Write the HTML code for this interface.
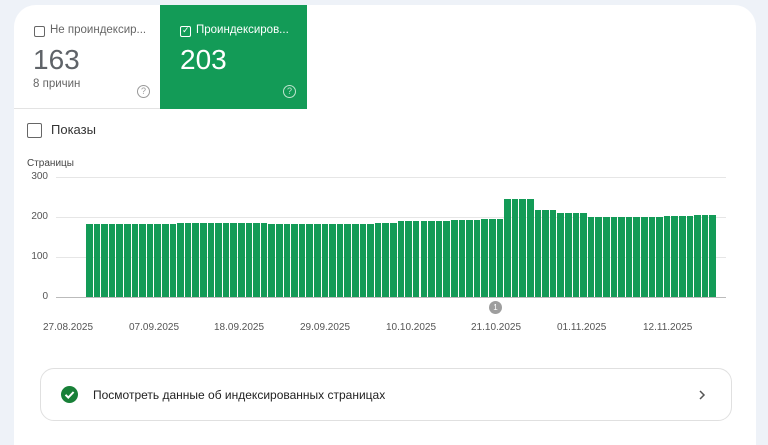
<!DOCTYPE html>
<html><head><meta charset="utf-8"><style>
*{margin:0;padding:0;box-sizing:border-box}
body{width:768px;height:432px;overflow:hidden;background:#eef2f8;font-family:"Liberation Sans",sans-serif;position:relative}
.card{position:absolute;left:14px;top:5px;width:742px;height:440px;background:#fff;border-radius:22px 22px 0 0;overflow:hidden}
.abs{position:absolute}
.t1{left:0;top:0;width:146px;height:104px;border-bottom:1px solid #e3e3e3}
.t2{left:146px;top:0;width:147px;height:104px;background:#139b57;color:#fff}
.cb{position:absolute;width:11px;height:11px;border:1.5px solid #666;border-radius:2px}
.grid{position:absolute;left:56px;width:670px;height:1px;background:#e6e6e6}
.yl{position:absolute;font-size:10px;color:#555;text-align:right;width:30px;left:4px}
.xl{position:absolute;top:322px;font-size:10px;color:#555}
</style></head><body>
<div class="card">
 <div class="abs t1">
  <div class="cb" style="left:20px;top:21px"></div>
  <div class="abs" style="left:36px;top:19px;font-size:11.5px;color:#666">Не проиндексир...</div>
  <div class="abs" style="left:19px;top:39px;font-size:28px;color:#5f6368">163</div>
  <div class="abs" style="left:19px;top:73px;font-size:11.5px;color:#666">8 причин</div>
  <div class="abs" style="left:123px;top:80px;width:13px;height:13px;border:1.3px solid #999;border-radius:50%;font-size:9px;color:#999;text-align:center;line-height:11px">?</div>
 </div>
 <div class="abs t2">
  <div class="cb" style="left:20px;top:21px;border-color:#fff"></div>
  <div class="abs" style="left:22px;top:20px;font-size:9px;color:#fff">✓</div>
  <div class="abs" style="left:36px;top:19px;font-size:11.5px">Проиндексиров...</div>
  <div class="abs" style="left:20px;top:39px;font-size:28px">203</div>
  <div class="abs" style="left:123px;top:80px;width:13px;height:13px;border:1.3px solid #bfe5cf;border-radius:50%;font-size:9px;color:#bfe5cf;text-align:center;line-height:11px">?</div>
 </div>
 <div class="cb" style="left:13px;top:118px;width:15px;height:15px;border-width:1.5px"></div>
 <div class="abs" style="left:37px;top:117px;font-size:13px;color:#333">Показы</div>
 <div class="abs" style="left:13px;top:153px;font-size:10px;color:#444">Страницы</div>
</div>
<div class="grid" style="top:177px"></div>
<div class="grid" style="top:217px"></div>
<div class="grid" style="top:257px"></div>
<div class="grid" style="top:297px;background:#bbb"></div>
<div class="yl" style="top:171px;left:18px">300</div>
<div class="yl" style="top:211px;left:18px">200</div>
<div class="yl" style="top:251px;left:18px">100</div>
<div class="yl" style="top:291px;left:18px">0</div>
<div id="bars"></div>
<div class="abs" style="left:489px;top:301px;width:13px;height:13px;border-radius:50%;background:#9e9e9e;color:#fff;font-size:8px;text-align:center;line-height:13px">1</div>
<div class="xl" style="left:43px">27.08.2025</div>
<div class="xl" style="left:129px">07.09.2025</div>
<div class="xl" style="left:214px">18.09.2025</div>
<div class="xl" style="left:300px">29.09.2025</div>
<div class="xl" style="left:386px">10.10.2025</div>
<div class="xl" style="left:471px">21.10.2025</div>
<div class="xl" style="left:557px">01.11.2025</div>
<div class="xl" style="left:643px">12.11.2025</div>
<div class="abs" style="left:40px;top:368px;width:692px;height:53px;border:1px solid #e0e0e0;border-radius:14px;background:#fff">
 <div class="abs" style="left:20px;top:17px;width:17px;height:17px;border-radius:50%;background:#188038"></div>
 <svg class="abs" style="left:20px;top:17px" width="17" height="17"><path d="M4.5 8.8l2.8 2.8 5.3-5.6" stroke="#fff" stroke-width="2" fill="none"/></svg>
 <div class="abs" style="left:52px;top:19px;font-size:12px;color:#222">Посмотреть данные об индексированных страницах</div>
 <svg class="abs" style="left:656px;top:20px" width="10" height="12"><path d="M3 2l4 4-4 4" stroke="#555" stroke-width="1.5" fill="none"/></svg>
</div>
<script>
var v=[];function a(n,h){for(var i=0;i<n;i++)v.push(h)}
a(12,182);a(12,185);a(14,182);a(3,184);a(7,190);a(4,192);a(3,195);a(4,245);a(3,218);a(4,210);a(10,200);a(4,202);a(3,204);
var s='',w=631/v.length;
for(var i=0;i<v.length;i++){var h=v[i]*0.4;s+='<div style="position:absolute;left:'+(86+i*w).toFixed(2)+'px;top:'+(297-h)+'px;width:'+(w-1).toFixed(2)+'px;height:'+h+'px;background:#139b57"></div>'}
document.getElementById('bars').innerHTML=s;
</script>
</body></html>
